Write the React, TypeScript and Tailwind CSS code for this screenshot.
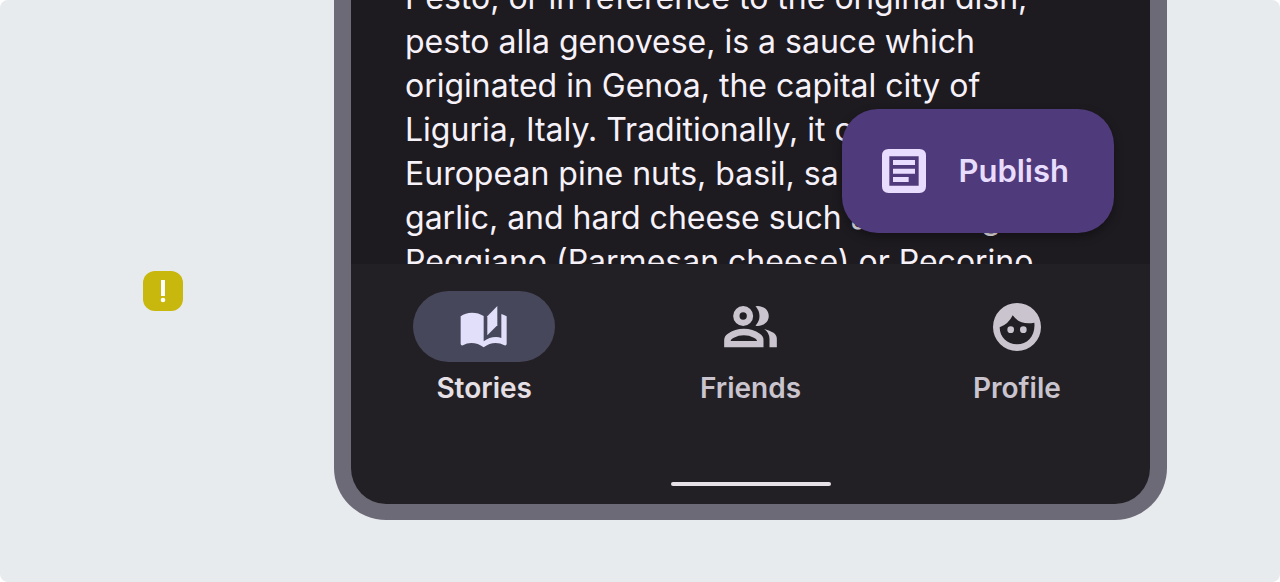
import type { ReactNode } from 'react'
import clsx from 'clsx'

const storyLines = [
  'Pesto, or in reference to the original dish,',
  'pesto alla genovese, is a sauce which',
  'originated in Genoa, the capital city of',
  'Liguria, Italy. Traditionally, it c',
  'European pine nuts, basil, sa',
  'garlic, and hard cheese such as Parmig',
  'Peggiano (Parmesan cheese) or Pecorino',
]

function ArticleIcon() {
  return (
    <svg width="44" height="44" viewBox="0 0 132 132" fill="currentColor" aria-hidden="true">
      <path fillRule="evenodd" d="M20 0H112Q132 0 132 20V112Q132 132 112 132H20Q0 132 0 112V20Q0 0 20 0ZM22 22V110H110V22Z" />
      <path d="M33 33H99V48H33ZM33 59H99V74H33ZM33 84H80V99H33Z" />
    </svg>
  )
}

function StoriesIcon() {
  return (
    <svg width="48" height="42" viewBox="0 0 144 126" fill="currentColor" aria-hidden="true">
      <path d="M112 0V58L82 88V31Z" />
      <path d="M2 31Q16 20 36 20Q56 20 71 30V106Q88 93 108 93Q117 93 124 96V24Q132 26 140 31V113Q140 120 133 118Q121 111 107 111Q88 111 71 124Q54 111 34 111Q20 111 9 118Q2 120 2 113Z" />
    </svg>
  )
}

function FriendsIcon() {
  return (
    <svg width="53" height="42" viewBox="0 0 158 126" fill="currentColor" aria-hidden="true">
      <path fillRule="evenodd" d="M57 0A30 30 0 1 1 57 60A30 30 0 1 1 57 0ZM57 19A11 11 0 1 0 57 41A11 11 0 1 0 57 19Z" />
      <path d="M94 1Q103 -1 112 2C141 11 141 49 112 58Q103 61 94 59Q106 46 106 30Q106 14 94 1Z" />
      <path fillRule="evenodd" d="M0 124V103Q0 90 11 83Q32 68 59 68Q86 68 107 83Q118 90 118 103V124ZM19 105H99Q97 98 89 95Q75 88 59 88Q43 88 29 95Q21 98 19 105Z" />
      <path d="M120 69Q134 72 148 80Q158 87 158 98V124H136V99Q136 80 120 69Z" />
    </svg>
  )
}

function ProfileIcon() {
  return (
    <svg width="48" height="48" viewBox="0 0 144 144" fill="currentColor" aria-hidden="true">
      <path fillRule="evenodd" d="M72 0A72 72 0 1 1 72 144A72 72 0 1 1 72 0ZM59 37Q47 63 20 73C20 103 43 124 72 124C104 124 128 97 124 59Q82 68 59 37Z" />
      <circle cx="53" cy="80" r="10" />
      <circle cx="91" cy="80" r="10" />
    </svg>
  )
}

const navItems: { label: string; icon: ReactNode; active: boolean }[] = [
  { label: 'Stories', icon: <StoriesIcon />, active: true },
  { label: 'Friends', icon: <FriendsIcon />, active: false },
  { label: 'Profile', icon: <ProfileIcon />, active: false },
]

export default function App() {
  return (
    <div className="bg-white font-['Inter',sans-serif]">
      <main className="flex min-h-screen overflow-hidden rounded-lg bg-[#e7ebee] pr-[113px]">
        <aside className="flex flex-1 items-center justify-center pr-2">
          <div role="img" aria-label="Caution" className="flex size-10 items-center justify-center rounded-xl bg-[#c8b70c] text-white">
            <svg width="6" height="24" viewBox="0 0 6 24" fill="currentColor" aria-hidden="true">
              <path d="M1 1H5V17H1Z" />
              <circle cx="3" cy="21" r="2.3" />
            </svg>
          </div>
        </aside>

        <section className="mb-[62px] w-[833px] max-w-full self-start overflow-hidden rounded-b-[52px] border-x-[17px] border-b-[16px] border-[#6d6a78] bg-[#222024]">
          <div className="relative h-[264px] overflow-hidden bg-[#1e1b20]">
            <p className="-mt-6 pl-[54px] text-[32px] leading-[44px] whitespace-nowrap text-[#f7f2fa]">
              {storyLines.map((line) => (
                <span key={line} className="block">{line}</span>
              ))}
            </p>
            <button className="absolute right-9 bottom-[31px] flex h-[124px] items-center gap-8 rounded-[36px] bg-[#4f3a7b] pr-[45px] pl-10 text-[31px] font-semibold text-[#e9ddff] shadow-[0_4px_10px_rgba(0,0,0,0.35)]">
              <ArticleIcon />
              Publish
            </button>
          </div>

          <nav className="grid grid-cols-3 pt-[27px]">
            {navItems.map((item) => (
              <a
                key={item.label}
                href={`#${item.label.toLowerCase()}`}
                className={clsx('flex flex-col items-center gap-2 text-[28px] leading-9 font-semibold', item.active ? 'text-[#e6e0e6]' : 'text-[#cac4cf]')}
              >
                <span className={clsx('flex h-[71px] w-[142px] items-center justify-center rounded-full', item.active && 'bg-[#47475b] text-[#e2dffb]')}>
                  {item.icon}
                </span>
                {item.label}
              </a>
            ))}
          </nav>
          <div className="flex justify-center pt-[76px] pb-[18px]">
            <div className="h-1 w-40 rounded-full bg-[#e6e1e6]" />
          </div>
        </section>
      </main>
    </div>
  )
}
